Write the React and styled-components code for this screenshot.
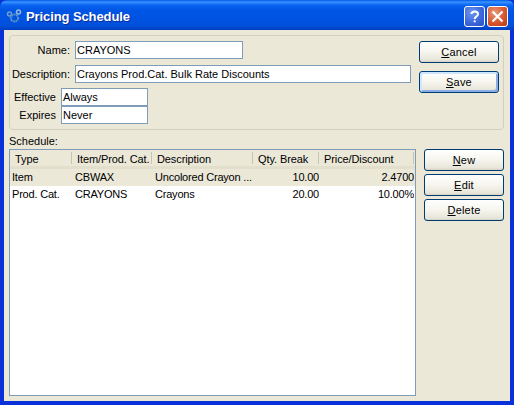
import React from "react";
import styled, { createGlobalStyle } from "styled-components";

const GlobalStyle = createGlobalStyle`
  html, body {
    margin: 0;
    padding: 0;
    background: #0831d9;
  }
  * {
    box-sizing: border-box;
  }
`;

const Window = styled.div`
  width: 514px;
  height: 405px;
  display: flex;
  flex-direction: column;
  overflow: hidden;
  border-radius: 7px 7px 0 0;
  background: #0831d9;
  font-family: "Liberation Sans", Arial, sans-serif;
  font-size: 11px;
  color: #000;
`;

const TitleBar = styled.div`
  height: 30px;
  flex: none;
  display: flex;
  align-items: center;
  padding: 2px 6px 0 6px;
  background: linear-gradient(
    to bottom,
    #0058e6 0,
    #3a93ff 2px,
    #0a66f0 5px,
    #0055e5 10px,
    #0053e1 20px,
    #0050d8 26px,
    #003dc0 30px
  );
`;

const AppIcon = styled.svg`
  width: 16px;
  height: 16px;
  margin-right: 4px;
`;

const Title = styled.div`
  flex: 1;
  color: #fff;
  font-family: "Liberation Sans", Arial, sans-serif;
  font-size: 13px;
  font-weight: 700;
  letter-spacing: -0.1px;
  text-shadow: 1px 1px 0 #0a2a9a;
`;

const CaptionButton = styled.div`
  width: 21px;
  height: 21px;
  margin-left: 2px;
  border: 1px solid #fff;
  border-radius: 3px;
  display: flex;
  align-items: center;
  justify-content: center;
  background: ${(p) =>
    p.$close
      ? "radial-gradient(circle at 35% 30%, #e89a7a 0, #d9552f 55%, #b93a17 100%)"
      : "radial-gradient(circle at 35% 30%, #6f97ee 0, #3c68dc 55%, #2a4fc0 100%)"};
`;

const CaptionIcon = styled.svg`
  width: 15px;
  height: 15px;
`;

const Client = styled.div`
  flex: 1;
  margin: 0 4px 4px;
  padding: 5px 6px 5px 5px;
  background: #ebe8d8;
  display: flex;
  flex-direction: column;
`;

const GroupBox = styled.div`
  height: 95px;
  flex: none;
  border: 1px solid #d0d0bf;
  border-radius: 4px;
  padding: 5px 4px 0 0;
  display: flex;
  justify-content: space-between;
`;

const FormArea = styled.div`
  display: flex;
  flex-direction: column;
`;

const NameRow = styled.div`
  display: flex;
  align-items: center;
  height: 18px;
  margin-bottom: ${(p) => p.$gap || 0}px;
`;

const FieldLabel = styled.div`
  width: ${(p) => p.$width}px;
  flex: none;
  text-align: right;
  padding-right: 5px;
  white-space: nowrap;
`;

const TextBox = styled.div`
  width: ${(p) => p.$width}px;
  height: 18px;
  flex: none;
  background: #fff;
  border: 1px solid #7f9db9;
  padding-left: 1px;
  line-height: 16px;
  white-space: nowrap;
  overflow: hidden;
`;

const ButtonColumn = styled.div`
  width: 80px;
  flex: none;
  display: flex;
  flex-direction: column;
  gap: ${(p) => p.$gap}px;
`;

const PushButton = styled.div`
  height: 22px;
  flex: none;
  border: 1px solid #003c74;
  border-radius: 3px;
  display: flex;
  align-items: center;
  justify-content: center;
  background: linear-gradient(to bottom, #ffffff 0, #f6f5ee 50%, #e8e6da 90%, #d6d0c4 100%);
  box-shadow: ${(p) =>
    p.$focused
      ? "inset 2px 2px 0 #cee7ff, inset -2px -2px 0 #89ade4"
      : "none"};
  font-size: 11px;
  letter-spacing: 0.2px;

  u {
    text-decoration: underline;
  }
`;

const ScheduleArea = styled.div`
  flex: 1;
  min-height: 0;
  display: flex;
  justify-content: space-between;
  align-items: stretch;
`;

const ListColumn = styled.div`
  width: 407px;
  display: flex;
  flex-direction: column;
`;

const SectionLabel = styled.div`
  height: 19px;
  padding-top: 5px;
  line-height: 13px;
`;

const ListView = styled.div`
  flex: 1;
  background: #fff;
  border: 1px solid #7f9db9;
  overflow: hidden;
`;

const columns = "62px 80px 101px 66px 95px";

const ListHeader = styled.div`
  display: grid;
  grid-template-columns: ${columns};
  height: 19px;
  background: #ebe8d8;
  border-bottom: 3px solid #e2dfcd;
`;

const HeaderCell = styled.div`
  padding-left: 5px;
  line-height: 18px;
  letter-spacing: -0.1px;
  white-space: nowrap;
  overflow: hidden;
  position: relative;

  &::after {
    content: "";
    position: absolute;
    right: 0;
    top: 2px;
    bottom: 2px;
    width: 1px;
    background: #c7c5b2;
  }
`;

const ListRow = styled.div`
  display: grid;
  grid-template-columns: ${columns};
  height: ${(p) => (p.$selected ? 17 : 16)}px;
  background: ${(p) => (p.$selected ? "#ebe8d8" : "#fff")};
`;

const Cell = styled.div`
  padding-left: ${(p) => (p.$first ? "2px" : p.$right ? "0" : "3px")};
  line-height: 17px;
  letter-spacing: -0.2px;
  text-align: ${(p) => (p.$right ? "right" : "left")};
  white-space: nowrap;
  overflow: hidden;
`;

const SideButtons = styled(ButtonColumn)`
  padding-top: 19px;
`;

const rows = [
  { type: "Item", item: "CBWAX", description: "Uncolored Crayon ...", qty: "10.00", price: "2.4700", selected: true },
  { type: "Prod. Cat.", item: "CRAYONS", description: "Crayons", qty: "20.00", price: "10.00%" },
];

function App() {
  return (
    <Window>
      <GlobalStyle />
      <TitleBar>
        <AppIcon viewBox="0 0 16 16" fill="none">
          <circle cx="3.5" cy="6" r="2" stroke="#6f9fd0" strokeWidth="1.5" />
          <circle cx="8.5" cy="10" r="3.6" stroke="#5a93c8" strokeWidth="2" strokeDasharray="2 0.6" />
          <circle cx="12.5" cy="4" r="2" stroke="#8fb8dc" strokeWidth="1.5" />
        </AppIcon>
        <Title>Pricing Schedule</Title>
        <CaptionButton>
          <CaptionIcon viewBox="0 0 15 15" fill="none">
            <path d="M4.5 5 C4.5 1.5 11 1.5 11 5 C11 7.5 7.7 7.5 7.7 10" stroke="#fff" strokeWidth="2" />
            <rect x="6.7" y="11.3" width="2" height="2" fill="#fff" />
          </CaptionIcon>
        </CaptionButton>
        <CaptionButton $close>
          <CaptionIcon viewBox="0 0 15 15" fill="none">
            <path d="M2.5 2.5 L12.5 12.5 M12.5 2.5 L2.5 12.5" stroke="#fff" strokeWidth="2.2" />
          </CaptionIcon>
        </CaptionButton>
      </TitleBar>
      <Client>
        <GroupBox>
          <FormArea>
            <NameRow $gap={6}>
              <FieldLabel $width={65}>Name:</FieldLabel>
              <TextBox $width={168}>CRAYONS</TextBox>
            </NameRow>
            <NameRow $gap={5}>
              <FieldLabel $width={65}>Description:</FieldLabel>
              <TextBox $width={336}>Crayons Prod.Cat. Bulk Rate Discounts</TextBox>
            </NameRow>
            <NameRow>
              <FieldLabel $width={51}>Effective</FieldLabel>
              <TextBox $width={87}>Always</TextBox>
            </NameRow>
            <NameRow>
              <FieldLabel $width={51}>Expires</FieldLabel>
              <TextBox $width={87}>Never</TextBox>
            </NameRow>
          </FormArea>
          <ButtonColumn $gap={8}>
            <PushButton><span><u>C</u>ancel</span></PushButton>
            <PushButton $focused><span><u>S</u>ave</span></PushButton>
          </ButtonColumn>
        </GroupBox>
        <ScheduleArea>
          <ListColumn>
            <SectionLabel>Schedule:</SectionLabel>
            <ListView>
              <ListHeader>
                <HeaderCell>Type</HeaderCell>
                <HeaderCell>Item/Prod. Cat.</HeaderCell>
                <HeaderCell>Description</HeaderCell>
                <HeaderCell>Qty. Break</HeaderCell>
                <HeaderCell>Price/Discount</HeaderCell>
              </ListHeader>
              {rows.map((row) => (
                <ListRow key={row.item} $selected={row.selected}>
                  <Cell $first>{row.type}</Cell>
                  <Cell>{row.item}</Cell>
                  <Cell>{row.description}</Cell>
                  <Cell $right>{row.qty}</Cell>
                  <Cell $right>{row.price}</Cell>
                </ListRow>
              ))}
            </ListView>
          </ListColumn>
          <SideButtons $gap={3}>
            <PushButton><span><u>N</u>ew</span></PushButton>
            <PushButton><span><u>E</u>dit</span></PushButton>
            <PushButton><span><u>D</u>elete</span></PushButton>
          </SideButtons>
        </ScheduleArea>
      </Client>
    </Window>
  );
}

export default App;
